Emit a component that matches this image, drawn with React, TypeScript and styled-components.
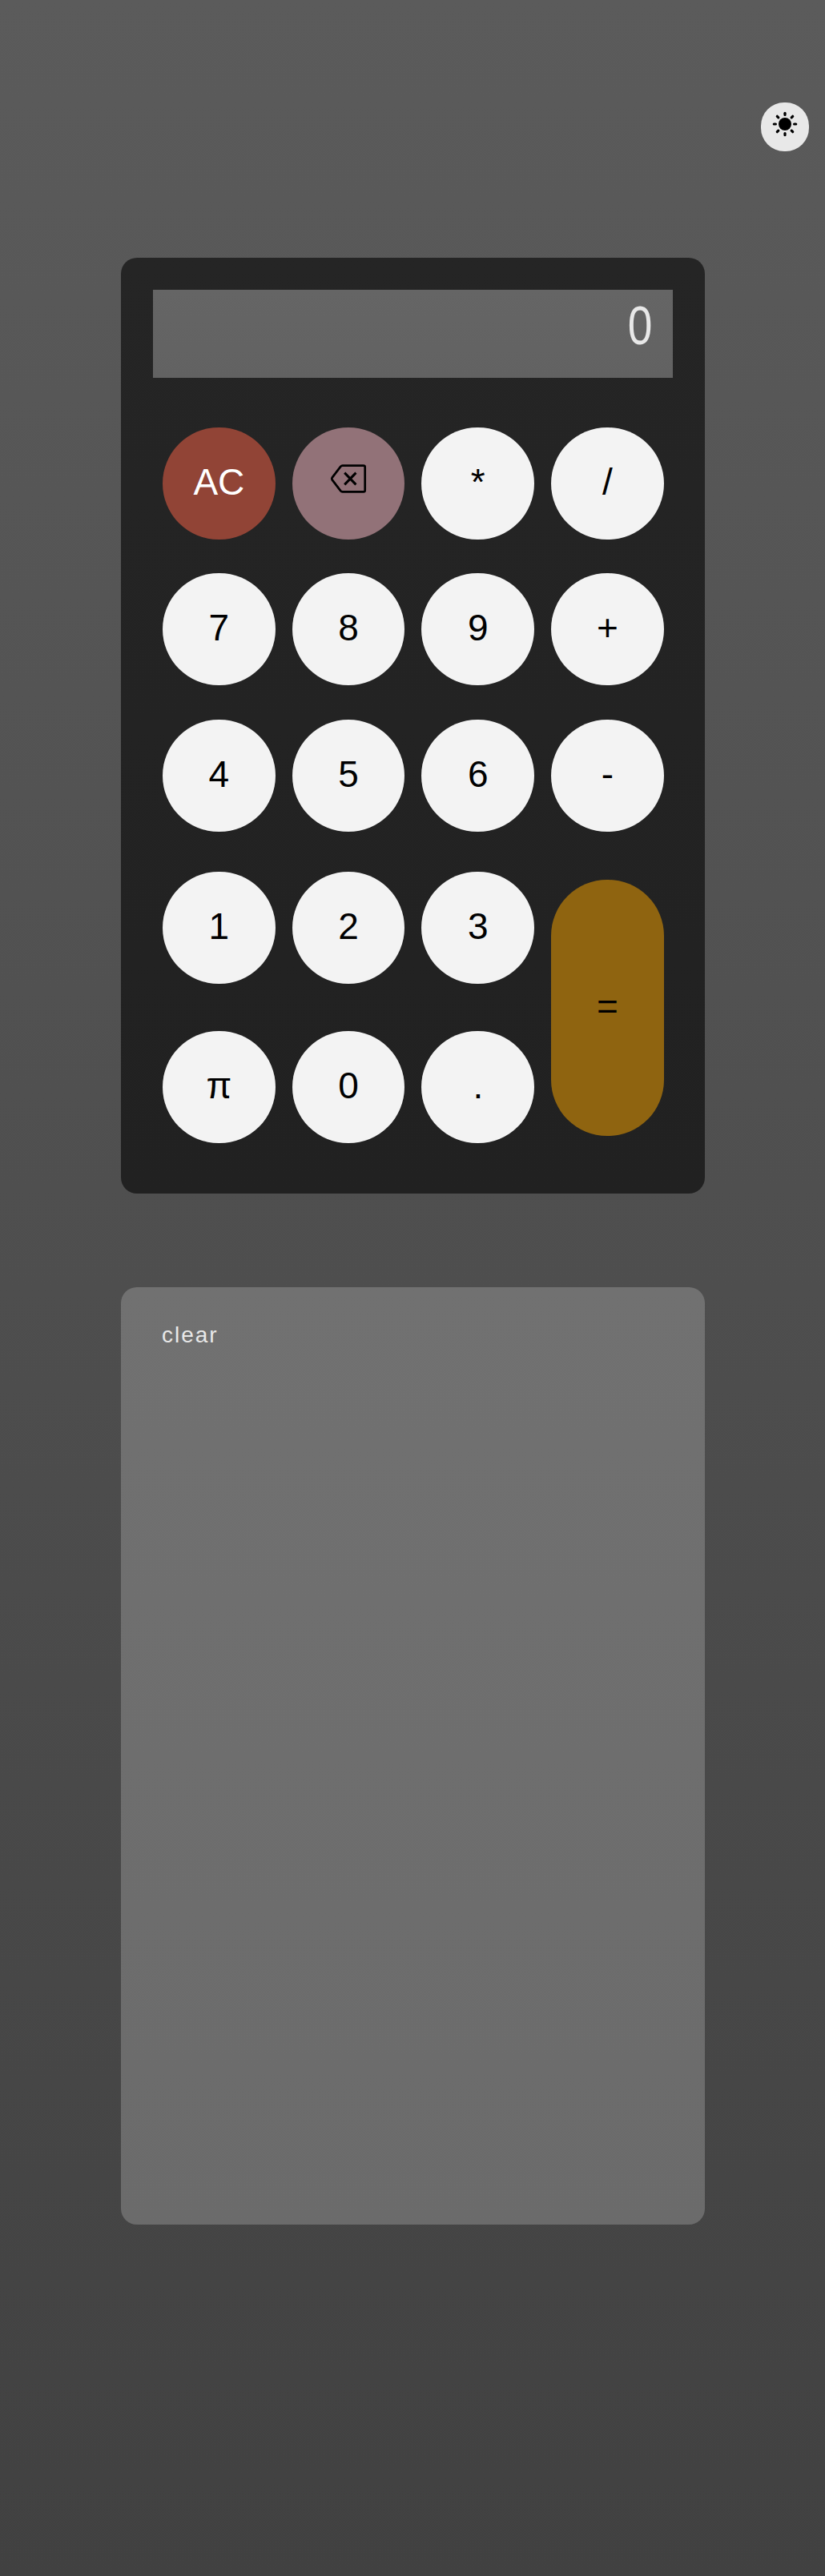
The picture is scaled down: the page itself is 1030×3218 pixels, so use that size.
import React, { useState } from "react";
import styled, { createGlobalStyle } from "styled-components";

const GlobalStyle = createGlobalStyle`
  * { box-sizing: border-box; }
  body {
    margin: 0;
    font-family: "Liberation Sans", Arial, sans-serif;
  }
`;

const Page = styled.main`
  display: flex;
  flex-direction: column;
  align-items: center;
  height: 3218px;
  background: linear-gradient(#5b5b5b, #414141);
`;

const TopBar = styled.header`
  display: flex;
  justify-content: flex-end;
  width: 100%;
  height: 322px;
  padding: 128px 20px 0 0;
`;

const ThemeToggle = styled.button`
  display: flex;
  justify-content: center;
  width: 60px;
  height: 61px;
  padding: 9.5px 0 0;
  border: 0;
  border-radius: 29px;
  background: #e8e8e8;
`;

const Calculator = styled.section`
  width: 729px;
  height: 1169px;
  padding: 40px;
  border-radius: 20px;
  background: linear-gradient(#252525, #212121);
`;

const Display = styled.output`
  display: flex;
  justify-content: flex-end;
  height: 110px;
  padding: 9px 25.5px 0 0;
  background: linear-gradient(#656565, #626262);
  color: #e8e8e8;
`;

const Digits = styled.span`
  font-size: 69px;
  line-height: 72px;
  transform: scaleX(0.8);
  transform-origin: right center;
`;

const Keypad = styled.div`
  display: grid;
  grid-template-columns: repeat(4, 140.8px);
  grid-template-rows: 182px 183px 190px 199px 140px;
  column-gap: 20.9px;
  align-items: start;
  margin: 62px 0 0 12.5px;
`;

type Tone = "plain" | "clear" | "erase" | "equals";

const toneColors: Record<Tone, string> = {
  plain: "#f3f3f3",
  clear: "#914436",
  erase: "#927278",
  equals: "#8f6410",
};

const Key = styled.button<{ $tone: Tone }>`
  display: flex;
  align-items: center;
  justify-content: center;
  width: 100%;
  height: ${(p) => (p.$tone === "equals" ? "320px" : "140px")};
  grid-row: ${(p) => (p.$tone === "equals" ? "span 2" : "auto")};
  margin: ${(p) => (p.$tone === "equals" ? "10px 0 0" : "0")};
  padding: 0 0 ${(p) => (p.$tone === "equals" ? "5px" : "4px")};
  border: 0;
  border-radius: 70px;
  background: ${(p) => toneColors[p.$tone]};
  color: ${(p) => (p.$tone === "clear" ? "#fff" : "#000")};
  font: 46px "Liberation Sans", Arial, sans-serif;
`;

const History = styled.section`
  width: 729px;
  height: 1171px;
  margin-top: 117px;
  padding: 41px 51.5px;
  border-radius: 20px;
  background: linear-gradient(#717171, #6b6b6b);
`;

const ClearHistory = styled.button`
  padding: 0;
  border: 0;
  background: none;
  color: #e8e8e8;
  font: 28px/38px "Liberation Sans", Arial, sans-serif;
  letter-spacing: 2px;
`;

const EraseGlyph = styled.svg`
  margin-bottom: 9px;
`;

const SunIcon = () => (
  <svg width="34" height="34" viewBox="-17 -17 34 34">
    <circle r="8" />
    {[0, 45, 90, 135, 180, 225, 270, 315].map((angle) => (
      <line
        key={angle}
        y1="-11.6"
        y2="-13.7"
        stroke="#000"
        strokeWidth="3.2"
        strokeLinecap="round"
        transform={`rotate(${angle})`}
      />
    ))}
  </svg>
);

const EraseIcon = () => (
  <EraseGlyph
    width="46"
    height="36"
    viewBox="0 0 46 36"
    fill="none"
    stroke="#000"
    strokeWidth="2.7"
    strokeLinecap="round"
    strokeLinejoin="round"
  >
    <path d="M15.6 1.7H41.8Q43.7 1.7 43.7 3.6V32.4Q43.7 34.3 41.8 34.3H15.6Q14.2 34.3 13.2 33.1L2.7 19.4Q1.8 18 2.7 16.6L13.2 2.9Q14.2 1.7 15.6 1.7Z" />
    <path d="M18.2 10.6 32.4 25.4M32.4 10.6 18.2 25.4" strokeLinecap="butt" strokeWidth="3" />
  </EraseGlyph>
);

const keys: { label: string; tone?: Tone }[] = [
  { label: "AC", tone: "clear" },
  { label: "erase", tone: "erase" },
  { label: "*" },
  { label: "/" },
  { label: "7" },
  { label: "8" },
  { label: "9" },
  { label: "+" },
  { label: "4" },
  { label: "5" },
  { label: "6" },
  { label: "-" },
  { label: "1" },
  { label: "2" },
  { label: "3" },
  { label: "=", tone: "equals" },
  { label: "π" },
  { label: "0" },
  { label: "." },
];

export default function App() {
  const [value, setValue] = useState("0");

  const press = (label: string) => {
    if (label === "AC") setValue("0");
    else if (label === "erase") setValue((v) => v.slice(0, -1) || "0");
    else if (label !== "=") setValue((v) => (v === "0" ? label : v + label));
  };

  return (
    <>
      <GlobalStyle />
      <Page>
        <TopBar>
          <ThemeToggle>
            <SunIcon />
          </ThemeToggle>
        </TopBar>
        <Calculator>
          <Display>
            <Digits>{value}</Digits>
          </Display>
          <Keypad>
            {keys.map(({ label, tone = "plain" }) => (
              <Key key={label} $tone={tone} onClick={() => press(label)}>
                {tone === "erase" ? <EraseIcon /> : label}
              </Key>
            ))}
          </Keypad>
        </Calculator>
        <History>
          <ClearHistory>clear</ClearHistory>
        </History>
      </Page>
    </>
  );
}
